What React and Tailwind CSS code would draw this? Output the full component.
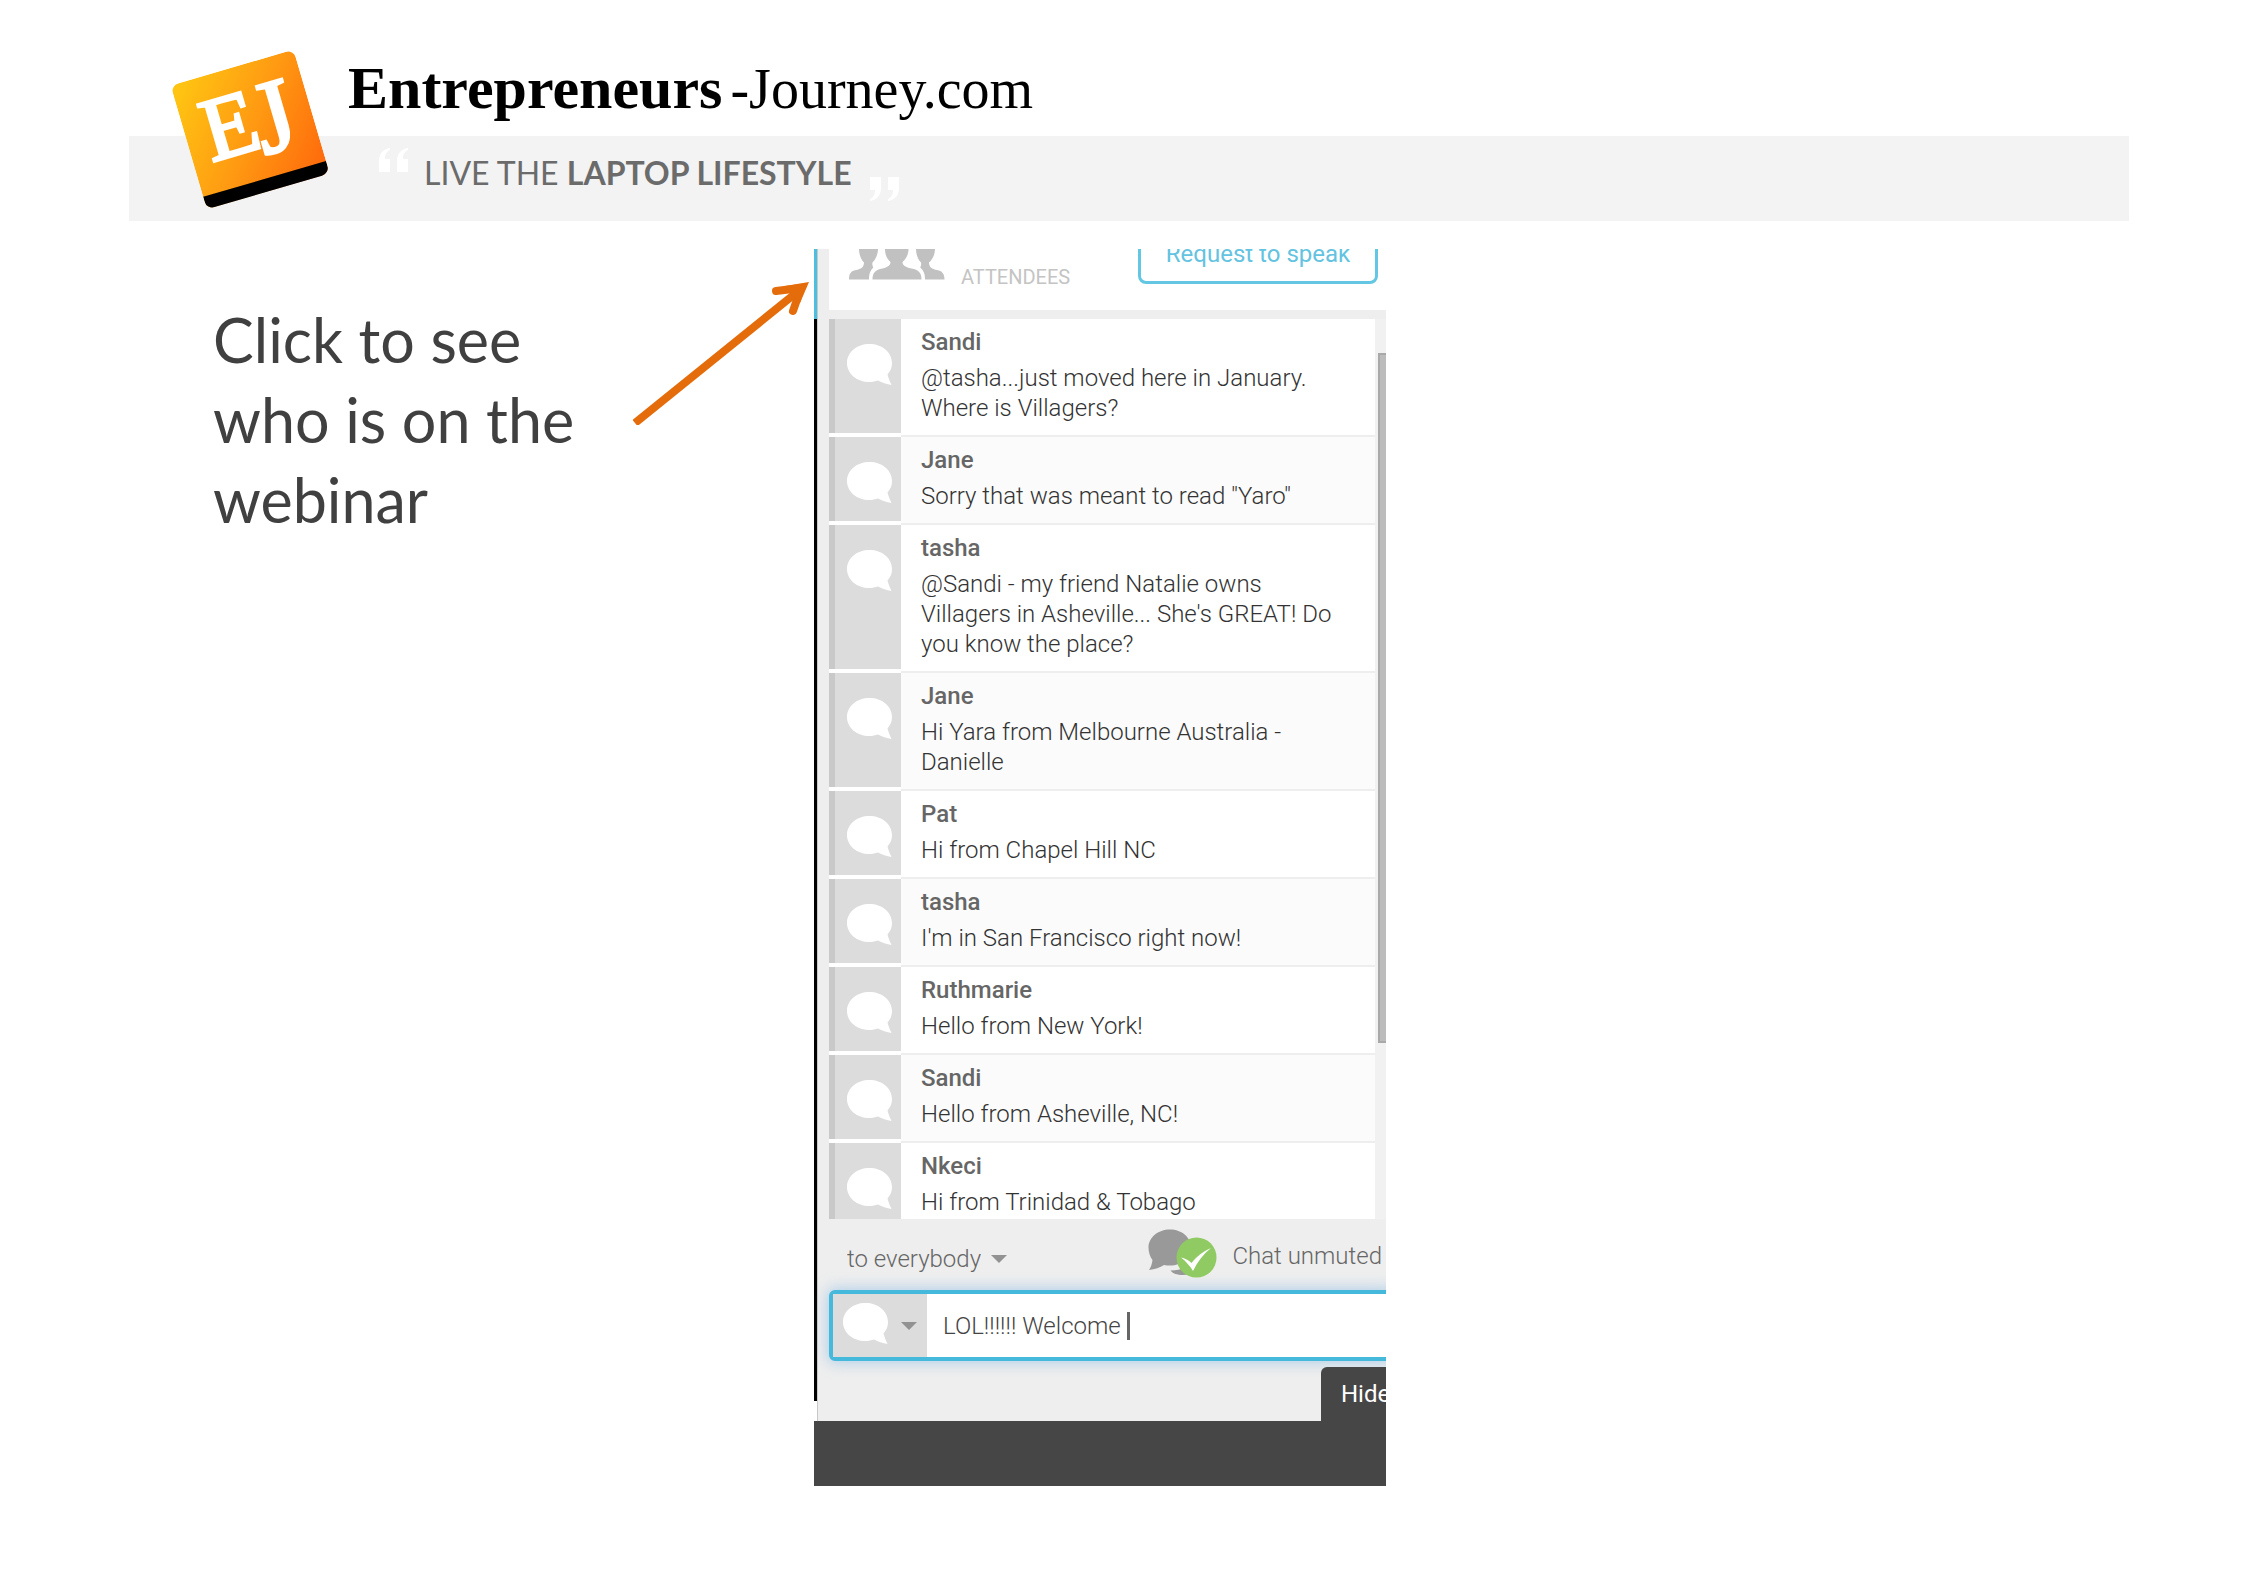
import React from "react";

const messages = [
  { name: "Sandi", lines: ["@tasha...just moved here in January.", "Where is Villagers?"] },
  { name: "Jane", lines: ['Sorry that was meant to read "Yaro"'] },
  { name: "tasha", lines: ["@Sandi - my friend Natalie owns", "Villagers in Asheville... She's GREAT! Do", "you know the place?"] },
  { name: "Jane", lines: ["Hi Yara from Melbourne Australia -", "Danielle"] },
  { name: "Pat", lines: ["Hi from Chapel Hill NC"] },
  { name: "tasha", lines: ["I'm in San Francisco right now!"] },
  { name: "Ruthmarie", lines: ["Hello from New York!"] },
  { name: "Sandi", lines: ["Hello from Asheville, NC!"] },
  { name: "Nkeci", lines: ["Hi from Trinidad & Tobago"] },
];

function Bubble({ className }) {
  return (
    <svg viewBox="0 0 45 41" className={className} fill="#fff" aria-hidden="true">
      <path d="M22.500 0C35 0 45 8 45 19c0 4.500-1.500 8-4.500 11.500 1 4 2.500 7 4 10.500-5-.8-9.500-2.500-13.500-4.500-2.700.8-5.500 1.500-8.500 1.500C10 38 0 30 0 19S10 0 22.500 0z" />
    </svg>
  );
}

function Caret() {
  return (
    <svg viewBox="0 0 16 8" className="h-2 w-4 shrink-0" fill="#929292" aria-hidden="true">
      <path d="M0 0h16L8 8z" />
    </svg>
  );
}

function Logo() {
  return (
    <svg viewBox="0 0 164 166" className="absolute top-[47px] left-[38px] h-[166px] w-[164px]" role="img" aria-label="EJ">
      <defs>
        <linearGradient id="tile" x1="0" y1="0.1" x2="1" y2="0.9">
          <stop offset="0" stopColor="#ffc412" />
          <stop offset="0.5" stopColor="#ff9a12" />
          <stop offset="1" stopColor="#ff6a0c" />
        </linearGradient>
        <clipPath id="tileShape">
          <rect x="-64" y="-64" width="128" height="129" rx="8" />
        </clipPath>
      </defs>
      <g transform="translate(83 82) rotate(-16.300)">
        <g clipPath="url(#tileShape)">
          <rect x="-64" y="-64" width="128" height="129" fill="url(#tile)" />
          <rect x="-64" y="52" width="128" height="14" fill="#000" />
        </g>
        <g fontFamily="Liberation Serif, serif" fill="#fff" stroke="#fff" strokeWidth="3">
          <text x="-46" y="21" fontSize="90">E</text>
          <text x="6" y="29" fontSize="104">J</text>
        </g>
      </g>
    </svg>
  );
}

function Header() {
  return (
    <header className="relative mx-[129px]">
      <div className="flex h-[136px] items-start pt-14 pl-[219px] font-['Liberation_Serif',serif] leading-[64px] text-black">
        <h1 className="flex items-baseline">
          <span className="text-[60px] font-bold">Entrepreneurs</span>
          <span className="ml-2 text-[56px]">-Journey.com</span>
        </h1>
      </div>
      <div className="flex h-[85px] items-start bg-[#f3f3f3] pl-[249px] font-['Lato',sans-serif] text-[32px] leading-[48px] text-[#6b6b6b]">
        <svg viewBox="0 0 32 24" className="mt-3 h-6 w-8" fill="#fff" aria-hidden="true">
          <path d="M12 0v2C8 4 7 7 7 11h5v13H1V13C1 6 5 1 12 0zM30 0v2c-4 2-5 5-5 9h5v13H19V13C19 6 23 1 30 0z" />
        </svg>
        <p className="mt-[13px] ml-[14px]">
          <span>LIVE THE </span>
          <strong className="font-bold">LAPTOP LIFESTYLE</strong>
        </p>
        <svg viewBox="0 0 32 24" className="mt-[41px] ml-4 h-6 w-8" fill="#fff" aria-hidden="true">
          <path d="M2 24v-2c4-2 5-5 5-9H2V0h11v11c0 7-4 12-11 13zM20 24v-2c4-2 5-5 5-9h-5V0h11v11c0 7-4 12-11 13z" />
        </svg>
      </div>
      <Logo />
    </header>
  );
}

function Callout() {
  return (
    <section className="flex items-start pl-[213px]">
      <p className="mt-[51px] w-[400px] shrink-0 font-['Lato',sans-serif] text-[61px] leading-[80px] text-[#404040]">
        Click to see
        <br />
        who is on the
        <br />
        webinar
      </p>
      <svg viewBox="0 0 176 144" className="mt-8 ml-5 h-[144px] w-[176px] shrink-0" aria-hidden="true">
        <g fill="none" stroke="#e46c0a" strokeWidth="8">
          <path d="M2 142L168 8" />
          <path d="M143 10L168 7L160 30" strokeLinecap="round" />
        </g>
        <path d="M176 1L152 5l15 17z" fill="#e46c0a" />
      </svg>
    </section>
  );
}

function PanelHeader() {
  return (
    <div className="flex h-[61px] items-start overflow-hidden bg-white">
      <svg viewBox="0 0 96 31" className="ml-5 h-[31px] w-24 shrink-0" fill="#c1c1c1" aria-hidden="true">
        <path d="M10 0h19c0 5-2 10-5.500 13.500-.5 2 0 3.500.8 5C21 22 20 25 20 30.500H0c0-6 2-8.500 7-9.500 5-.8 8-3 8-7.500C11.500 10 10 5 10 0z" />
        <path d="M67 0h19c0 5-2 10-6 13.500 0 4.500 3 6.700 8 7.500 5 1 7.500 3.500 7.500 9.500H76c0-5.500-1-8.500-4.800-12 .8-1.500 1.300-3 .8-5C68.500 10 67 5 67 0z" />
        <path d="M36 0h23.500c0 5-2 9.500-6 13 0 3 2 5 9 6.500 7 1.500 10 4 10 11h-49c0-7 3-9.500 10-11 6-1.500 8-3.500 8-6.500C37.500 9.500 36 5 36 0z" />
      </svg>
      <span className="mt-4 ml-4 text-[20px] leading-6 text-[#c4c4c4]">ATTENDEES</span>
      <button type="button" className="-mt-7 mr-2 ml-auto h-[63px] w-60 shrink-0 rounded-lg border-[3px] border-[#63c7e3] pt-[2px] text-2xl leading-7 text-[#63c3e0]">
        Request to speak
      </button>
    </div>
  );
}

function Message({ name, lines, shaded }) {
  return (
    <li className="flex">
      <div className="mb-1 w-[72px] shrink-0 border-l-[6px] border-[#c9c9c9] bg-[#dcdcdc] pt-[25px] pl-3">
        <Bubble className="h-[41px] w-[45px]" />
      </div>
      <div className={`flex-1 border-b-2 border-[#eee] pt-2 pb-3 pl-5 ${shaded ? "bg-[#fbfbfb]" : "bg-white"}`}>
        <h2 className="mb-[6px] text-2xl leading-[30px] font-medium text-[#666]">{name}</h2>
        {lines.map((line) => (
          <p key={line} className="text-2xl leading-[30px] font-light whitespace-nowrap text-[#333]">{line}</p>
        ))}
      </div>
    </li>
  );
}

function ChatPanel() {
  return (
    <main className="overflow-hidden bg-[#eee] font-['Roboto',sans-serif]">
      <div className="flex">
        <div className="flex w-1 shrink-0 flex-col border-r border-[#c8c8c8] bg-white">
          <div className="h-[70px] bg-[#4bbfdf]" />
          <div className="flex-1 bg-black" />
          <div className="h-5" />
        </div>
        <div className="min-w-0 flex-1 pl-[11px]">
          <PanelHeader />
          <div className="mt-[9px] flex h-[900px] overflow-hidden">
            <ul className="flex-1 bg-white">
              {messages.map((m, i) => (
                <Message key={i} name={m.name} lines={m.lines} shaded={i % 2 === 1} />
              ))}
            </ul>
            <div className="w-[11px] bg-[#f1f1f1] pt-[34px] pl-[3px]">
              <div className="h-[690px] border-2 border-r-0 border-[#a9a9a9] bg-[#bcbcbc]" />
            </div>
          </div>
          <div className="flex h-[71px] items-start pl-[18px] text-2xl leading-7 text-[#666]">
            <label className="mt-[26px] flex items-center gap-[10px]">
              <select aria-label="Send to" className="field-sizing-content appearance-none bg-transparent font-light">
                <option>to everybody</option>
              </select>
              <Caret />
            </label>
            <svg viewBox="0 0 70 50" className="mt-[10px] mr-[14px] ml-auto h-[50px] w-[70px] shrink-0" aria-hidden="true">
              <path d="M22 0.500c12 0 21 8 21 18S34 36.500 22 36.500c-2 0-4-.2-6-.6-4 2.500-9 4.300-15 5.100 2-3 3-6 3.500-10C2 28 .5 23 .5 18.500.5 8.500 10 .5 22 .5z" fill="#999" />
              <path d="M22.500 41.500c6-.3 10-1 14-2.500l6 6c-8 2-17 1-20-3.500z" fill="#999" />
              <circle cx="48.500" cy="28.500" r="20" fill="#8fca62" />
              <path d="M33 28.500c4 .8 7.500 2.500 10.500 5.500 5-6.500 11-11 19.500-15-7.500 6-13.500 13.500-18 23-3-5-7-9.500-12-13.500z" fill="#fff" />
            </svg>
            <span className="mt-[23px] mr-1 font-light whitespace-nowrap">Chat unmuted</span>
          </div>
          <div className="-mr-2 flex h-[71px] rounded-md border-4 border-[#45b9dc] bg-white shadow-[0_0_14px_2px_rgba(120,180,230,0.5)]">
            <button type="button" aria-label="Message colour" className="flex w-[94px] shrink-0 items-center gap-[13px] bg-[#dcdcdc] pl-[10px]">
              <Bubble className="mb-1 h-[41px] w-[45px]" />
              <Caret />
            </button>
            <div className="flex items-center pl-4">
              <input aria-label="Message" defaultValue="LOL!!!!!! Welcome " className="field-sizing-content text-2xl leading-7 font-light text-[#444] outline-none" />
              <span className="h-7 w-[3px] bg-[#666]" />
            </div>
          </div>
          <div className="flex h-[60px] items-end justify-end">
            <button type="button" className="h-[54px] w-[65px] rounded-tl-md bg-[#464646] pl-5 text-left text-2xl leading-7 whitespace-nowrap text-white">
              Hide
            </button>
          </div>
        </div>
      </div>
      <div className="h-[65px] bg-[#464646]" />
    </main>
  );
}

export default function App() {
  return (
    <div className="min-h-screen bg-white">
      <Header />
      <div className="mt-7 grid grid-cols-[814fr_572fr_872fr]">
        <Callout />
        <ChatPanel />
      </div>
    </div>
  );
}
